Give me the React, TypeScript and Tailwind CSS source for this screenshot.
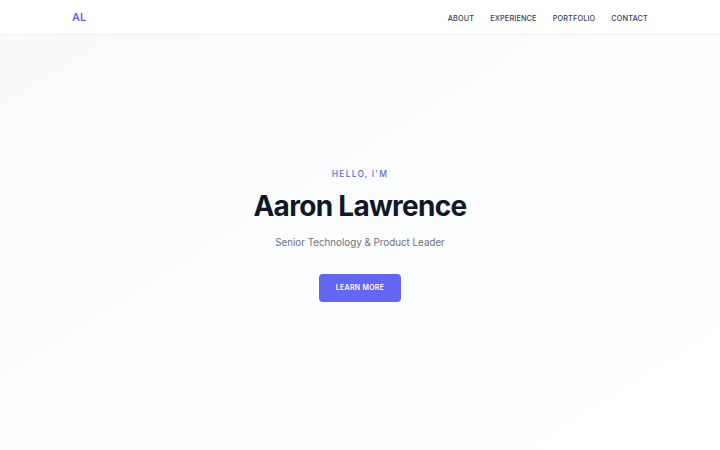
const links = ["About", "Experience", "Portfolio", "Contact"];

export default function App() {
	return (
		<div
			className="flex min-h-screen flex-col bg-gradient-to-br from-[#f8fafc] to-white text-[#111827]"
			style={{ fontFamily: "Inter, 'Noto Sans', sans-serif" }}
		>
			{/* Top navigation */}
			<header className="border-b border-[#eef0f3] bg-white">
				<nav className="mx-auto flex h-[34px] max-w-xl items-center justify-between">
					<a href="#" className="mt-[1px] text-[11px] font-semibold text-[#6366f1]">
						AL
					</a>
					<ul className="mb-[5px] flex items-center gap-[16px]">
						{links.map((link) => (
							<li key={link} className="leading-none">
								<a
									href={`#${link.toLowerCase()}`}
									className="text-[7.3px] font-medium uppercase tracking-[0.02em] text-[#374151]"
								>
									{link}
								</a>
							</li>
						))}
					</ul>
				</nav>
			</header>

			{/* Hero */}
			<section className="flex flex-1 flex-col items-center justify-center pb-[15px] text-center">
				<p className="text-[8.5px] font-medium uppercase tracking-[0.14em] text-[#6366f1]">
					Hello, I'm
				</p>
				<h1 className="mt-[8px] text-[28px] font-bold leading-tight tracking-tight text-[#111827]">
					Aaron Lawrence
				</h1>
				<p className="mt-[12px] text-[9.8px] text-[#6b7280]">
					Senior Technology &amp; Product Leader
				</p>
				<a
					href="#about"
					className="mt-[24px] flex h-[28px] w-[82px] items-center justify-center rounded-[4px] bg-[#6366f1] text-[7px] font-semibold uppercase tracking-[0.04em] text-white"
				>
					Learn More
				</a>
			</section>
		</div>
	);
}
